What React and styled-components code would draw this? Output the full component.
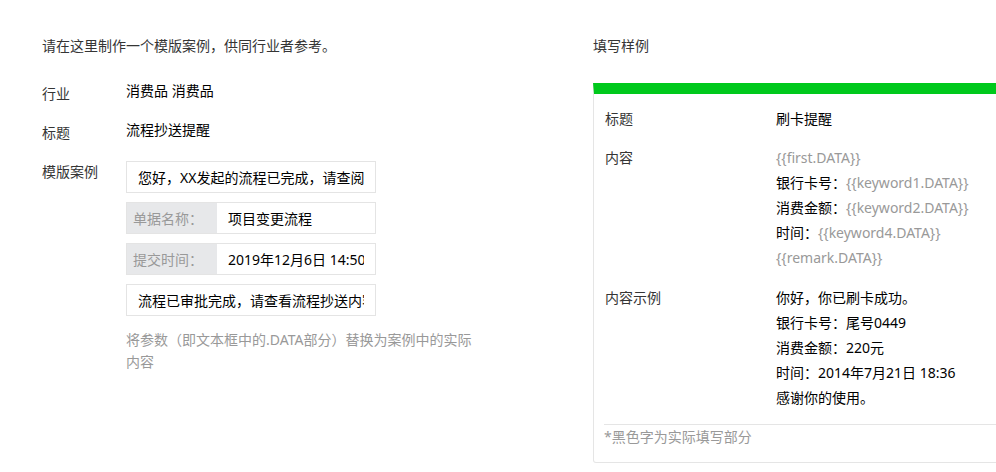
import styled, { createGlobalStyle } from "styled-components";

const GlobalStyle = createGlobalStyle`
  html, body {
    margin: 0;
    padding: 0;
    background: #fff;
    overflow: hidden;
  }
  body {
    font-family: "Noto Sans", "Noto Sans CJK SC", sans-serif;
    font-size: 14px;
    color: #353535;
  }
`;

const Page = styled.div`
  display: flex;
  padding: 35px 0 0 42px;
  width: 1100px;
`;

const LeftCol = styled.div`
  width: 551px;
  flex: none;
`;

const RightCol = styled.div`
  width: 460px;
  flex: none;
`;

const Intro = styled.div`
  line-height: 22px;
  color: #353535;
  margin-bottom: ${(p) => p.$gap || 23}px;
`;

const Row = styled.div`
  display: flex;
  margin-bottom: ${(p) => p.$gap || 0}px;
`;

const Label = styled.div`
  width: 84px;
  flex: none;
  line-height: 22px;
  padding-top: ${(p) => (p.$top === undefined ? 3 : p.$top)}px;
  color: #353535;
`;

const Value = styled.div`
  line-height: 22px;
  color: #000;
`;

const Boxes = styled.div`
  display: flex;
  flex-direction: column;
  gap: 9px;
`;

const Box = styled.div`
  width: 250px;
  height: 32px;
  box-sizing: border-box;
  border: 1px solid #e4e4e4;
  display: flex;
  align-items: center;
  white-space: nowrap;
  color: #000;
  padding: 0 ${(p) => (p.$field ? 11 : 11)}px 0 ${(p) => (p.$field ? 0 : 11)}px;
`;

const Clip = styled.span`
  display: block;
  flex: 1;
  min-width: 0;
  overflow: hidden;
  padding-left: ${(p) => p.$indent || 0}px;
`;

const FieldName = styled.div`
  width: 90px;
  flex: none;
  align-self: stretch;
  background: #e7e8ea;
  color: #999;
  display: flex;
  align-items: center;
  padding-left: 6px;
  box-sizing: border-box;
`;

const Note = styled.div`
  width: 356px;
  margin-top: 13px;
  line-height: 22px;
  color: #999;
`;

const Card = styled.div`
  border: 1px solid #e5e5e5;
  border-top: 11px solid #00c91c;
  border-radius: 0 0 3px 3px;
`;

const CardBody = styled.div`
  padding: 12px 11px 0;
`;

const CardRow = styled.div`
  display: flex;
  padding-bottom: ${(p) => p.$gap || 14}px;
  line-height: 25px;
`;

const CardLabel = styled.div`
  width: 171px;
  flex: none;
  color: #353535;
`;

const CardValue = styled.div`
  color: #000;
`;

const Line = styled.div`
  color: ${(p) => (p.$muted ? "#999" : "#000")};
`;

const Param = styled.span`
  color: #999;
`;

const CardFoot = styled.div`
  margin: 0 0 0 10px;
  border-top: 1px solid #e5e5e5;
  line-height: 22px;
  padding: 1px 0 14px;
  color: #999;
`;

const fields = [
  { name: "单据名称：", value: "项目变更流程" },
  { name: "提交时间：", value: "2019年12月6日 14:50" },
];

export default function App() {
  return (
    <>
      <GlobalStyle />
      <Page>
        <LeftCol>
          <Intro>请在这里制作一个模版案例，供同行业者参考。</Intro>
          <Row $gap={14}>
            <Label>行业</Label>
            <Value>消费品 消费品</Value>
          </Row>
          <Row $gap={17}>
            <Label>标题</Label>
            <Value>流程抄送提醒</Value>
          </Row>
          <Row>
            <Label $top={0}>模版案例</Label>
            <div>
              <Boxes>
                <Box>
                  <Clip>您好，XX发起的流程已完成，请查阅</Clip>
                </Box>
                {fields.map((f) => (
                  <Box $field key={f.name}>
                    <FieldName>{f.name}</FieldName>
                    <Clip $indent={11}>{f.value}</Clip>
                  </Box>
                ))}
                <Box>
                  <Clip>流程已审批完成，请查看流程抄送内容</Clip>
                </Box>
              </Boxes>
              <Note>将参数（即文本框中的.DATA部分）替换为案例中的实际内容</Note>
            </div>
          </Row>
        </LeftCol>
        <RightCol>
          <Intro $gap={26}>填写样例</Intro>
          <Card>
            <CardBody>
              <CardRow>
                <CardLabel>标题</CardLabel>
                <CardValue>刷卡提醒</CardValue>
              </CardRow>
              <CardRow $gap={15}>
                <CardLabel>内容</CardLabel>
                <CardValue>
                  <Line $muted>{"{{first.DATA}}"}</Line>
                  <Line>
                    银行卡号：<Param>{"{{keyword1.DATA}}"}</Param>
                  </Line>
                  <Line>
                    消费金额：<Param>{"{{keyword2.DATA}}"}</Param>
                  </Line>
                  <Line>
                    时间：<Param>{"{{keyword4.DATA}}"}</Param>
                  </Line>
                  <Line $muted>{"{{remark.DATA}}"}</Line>
                </CardValue>
              </CardRow>
              <CardRow>
                <CardLabel>内容示例</CardLabel>
                <CardValue>
                  <Line>你好，你已刷卡成功。</Line>
                  <Line>银行卡号：尾号0449</Line>
                  <Line>消费金额：220元</Line>
                  <Line>时间：2014年7月21日 18:36</Line>
                  <Line>感谢你的使用。</Line>
                </CardValue>
              </CardRow>
            </CardBody>
            <CardFoot>*黑色字为实际填写部分</CardFoot>
          </Card>
        </RightCol>
      </Page>
    </>
  );
}
